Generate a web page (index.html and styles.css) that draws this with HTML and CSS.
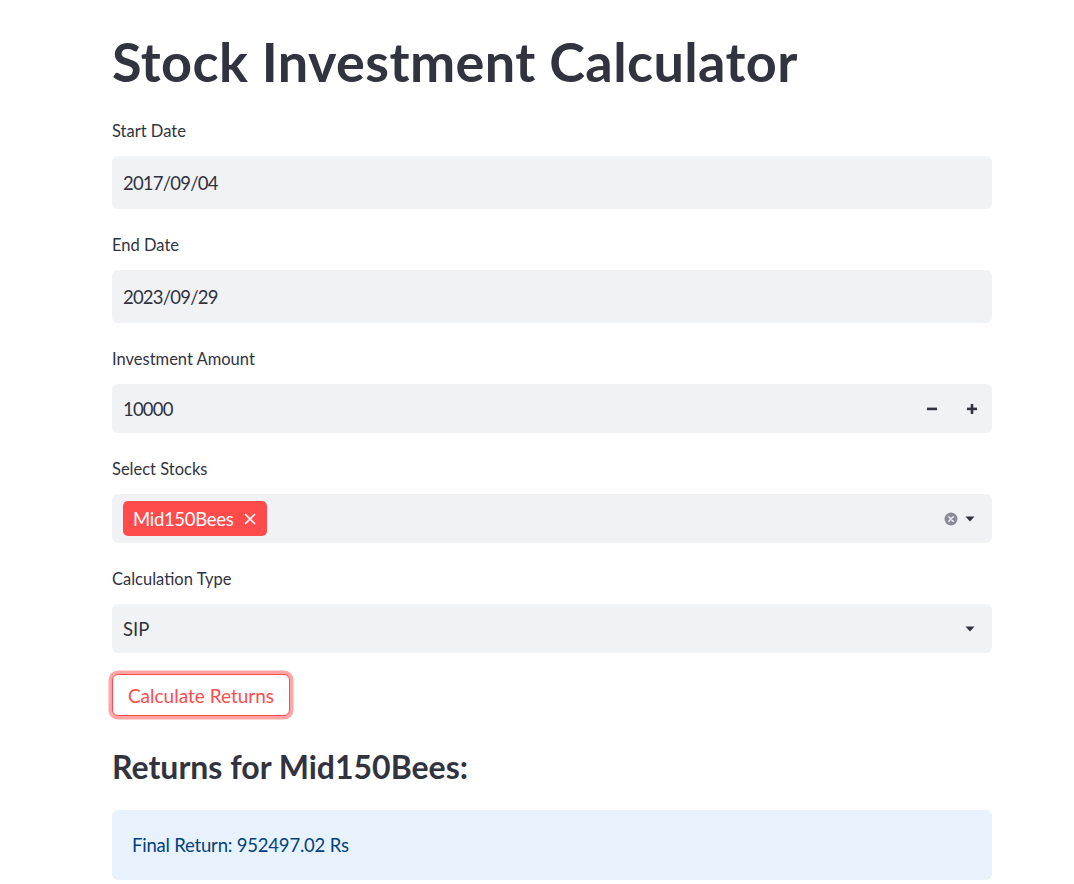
FILE: index.html
```html
<!DOCTYPE html>
<html lang="en">
<head>
<meta charset="utf-8">
<title>Stock Investment Calculator</title>
<link rel="stylesheet" href="styles.css">
</head>
<body>
<main class="main">
  <h1 class="title">Stock Investment Calculator</h1>

  <div class="widgets">
    <div class="widget">
      <div class="label">Start Date</div>
      <div class="box box-date"><span class="value num">2017/09/04</span></div>
    </div>

    <div class="widget">
      <div class="label">End Date</div>
      <div class="box box-date"><span class="value num">2023/09/29</span></div>
    </div>

    <div class="widget">
      <div class="label">Investment Amount</div>
      <div class="box box-std">
        <span class="value num">10000</span>
        <div class="steppers">
          <span class="step">
            <svg width="12" height="12" viewBox="0 0 12 12"><rect x="1" y="4.6" width="10" height="2.6" fill="#31333F"/></svg>
          </span>
          <span class="step">
            <svg width="12" height="12" viewBox="0 0 12 12"><rect x="1" y="4.6" width="10" height="2.6" fill="#31333F"/><rect x="4.7" y="1" width="2.6" height="10" fill="#31333F"/></svg>
          </span>
        </div>
      </div>
    </div>

    <div class="widget">
      <div class="label">Select Stocks</div>
      <div class="box box-std box-multi">
        <span class="tag">Mid150Bees
          <svg class="tag-x" width="12" height="12" viewBox="0 0 12 12"><path d="M1.5 1.5 L10.5 10.5 M10.5 1.5 L1.5 10.5" stroke="#fff" stroke-width="1.7" stroke-linecap="round"/></svg>
        </span>
        <div class="icons">
          <svg width="14" height="14" viewBox="0 0 14 14"><circle cx="7" cy="7" r="6.5" fill="#8A8D97"/><path d="M4.8 4.8 L9.2 9.2 M9.2 4.8 L4.8 9.2" stroke="#F0F2F6" stroke-width="1.5" stroke-linecap="round"/></svg>
          <svg width="10" height="6" viewBox="0 0 10 6"><path d="M0.5 0.5 H9.5 L5 5.5 Z" fill="#31333F"/></svg>
        </div>
      </div>
    </div>

    <div class="widget">
      <div class="label">Calculation Type</div>
      <div class="box box-std box-select">
        <span class="value">SIP</span>
        <div class="icons">
          <svg width="10" height="6" viewBox="0 0 10 6"><path d="M0.5 0.5 H9.5 L5 5.5 Z" fill="#31333F"/></svg>
        </div>
      </div>
    </div>
  </div>

  <button class="btn" type="button">Calculate Returns</button>

  <h3 class="subheading">Returns for Mid150Bees:</h3>

  <div class="info">Final Return: 952497.02 Rs</div>
</main>
</body>
</html>
```

FILE: styles.css
```css
* {
  box-sizing: border-box;
}

html, body {
  margin: 0;
  padding: 0;
  background: #ffffff;
}

body {
  font-family: Lato, "Source Sans Pro", "Noto Sans", sans-serif;
  color: #31333F;
}

.main {
  width: 880px;
  margin-left: 112px;
  padding-top: 30px;
  display: flex;
  flex-direction: column;
  align-items: flex-start;
}

.title {
  margin: 0 0 27px 0;
  font-size: 54px;
  line-height: 64px;
  font-weight: 700;
  letter-spacing: 0.4px;
  color: #31333F;
  white-space: nowrap;
}

.widgets {
  width: 100%;
  display: flex;
  flex-direction: column;
  gap: 26px;
}

.widget {
  display: flex;
  flex-direction: column;
}

.label {
  font-size: 16.5px;
  line-height: 20px;
  height: 20px;
  margin-bottom: 15px;
  color: #31333F;
}

.box {
  width: 100%;
  background: #F0F2F6;
  border-radius: 6px;
  display: flex;
  align-items: center;
  padding-left: 11px;
  font-size: 18.5px;
  color: #31333F;
}

.box-date {
  height: 53px;
}

.box-std {
  height: 49px;
}

.value {
  flex: 1;
}

.num {
  letter-spacing: -0.8px;
}

.steppers {
  display: flex;
  height: 100%;
}

.step {
  width: 40px;
  height: 100%;
  display: flex;
  align-items: center;
  justify-content: center;
}

.box-multi {
  padding-left: 11px;
}

.tag {
  background: #FF4B4B;
  color: #ffffff;
  border-radius: 5px;
  height: 35px;
  padding: 0 11px 0 10px;
  display: flex;
  align-items: center;
  gap: 11px;
  font-size: 18.5px;
  letter-spacing: -0.3px;
}

.tag-x {
  display: block;
}

.icons {
  margin-left: auto;
  display: flex;
  align-items: center;
  gap: 7px;
  padding-right: 17px;
}

.icons svg {
  display: block;
}

.btn {
  margin-top: 21px;
  height: 42px;
  width: 178px;
  background: #ffffff;
  border: 1px solid #FF4B4B;
  border-radius: 6px;
  box-shadow: 0 0 0 3.5px rgba(255, 75, 75, 0.5);
  color: #FF4B4B;
  font-family: inherit;
  font-size: 19px;
  padding: 0;
  cursor: pointer;
}

.subheading {
  margin: 31px 0 23px 0;
  font-size: 32px;
  line-height: 40px;
  font-weight: 700;
  color: #31333F;
}

.info {
  width: 100%;
  height: 70px;
  background: #E8F2FC;
  border-radius: 6px;
  padding: 0 20px;
  display: flex;
  align-items: center;
  font-size: 18.5px;
  letter-spacing: -0.2px;
  color: #004280;
}
```
